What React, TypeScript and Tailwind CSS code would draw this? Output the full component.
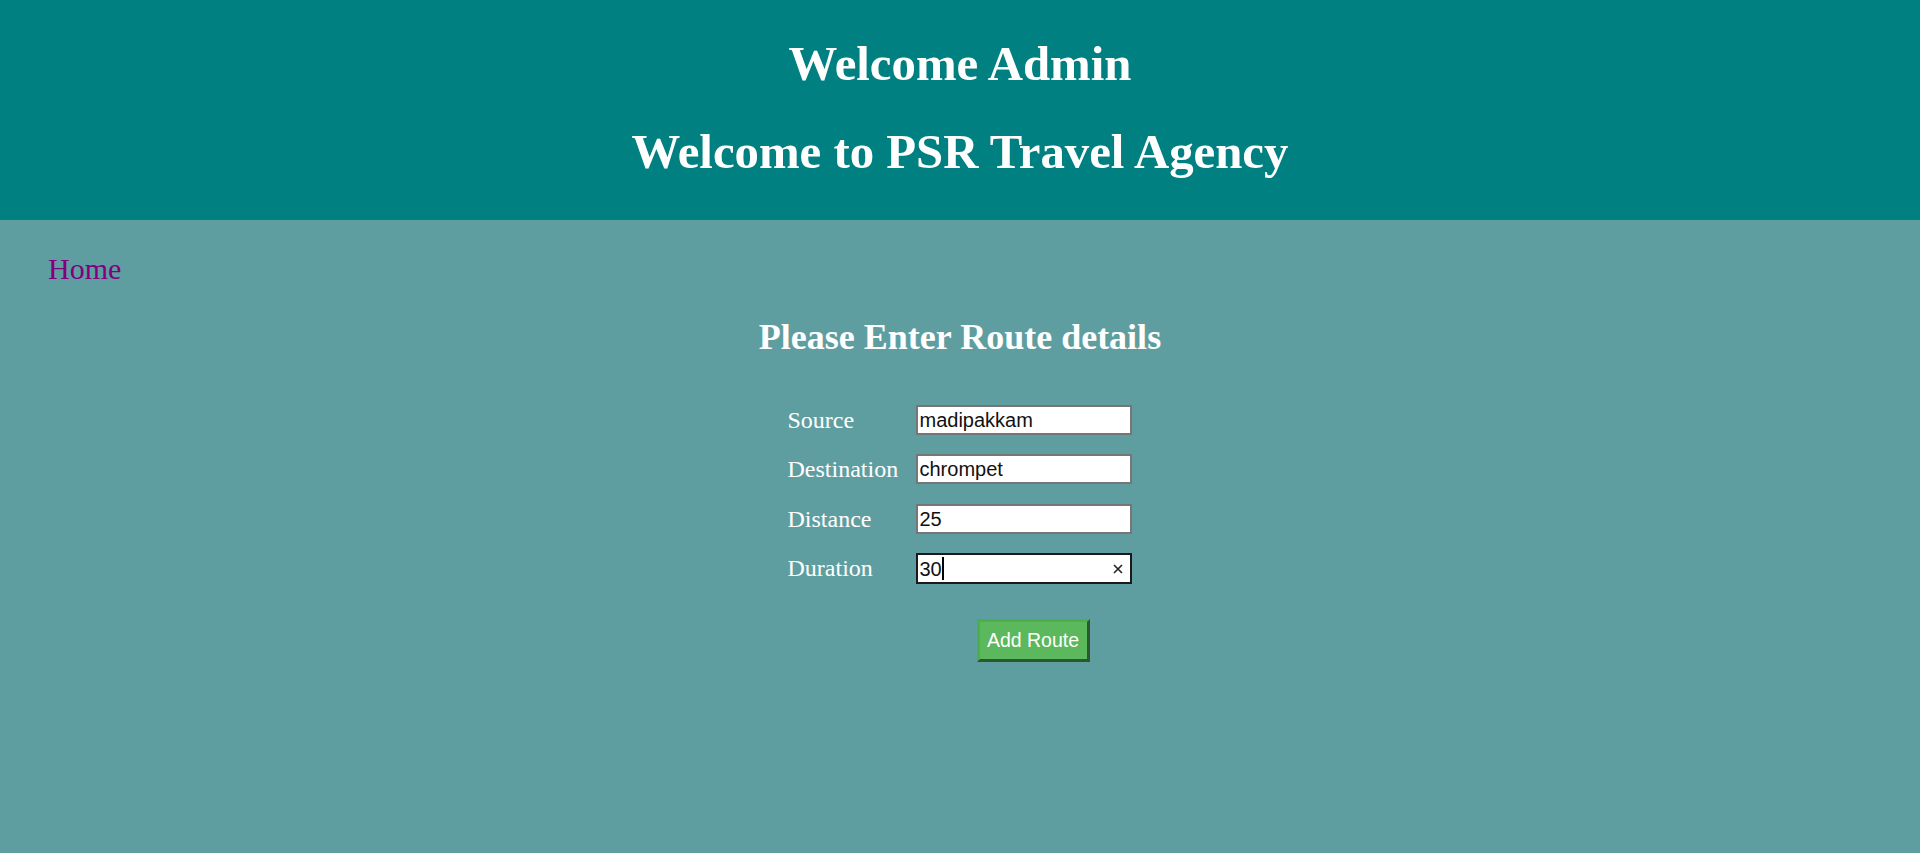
const serif = "font-['Liberation_Serif','Times_New_Roman',serif]";
const sans = "font-['Liberation_Sans',Arial,sans-serif]";

const fields = [
    { label: 'Source', value: 'madipakkam' },
    { label: 'Destination', value: 'chrompet' },
    { label: 'Distance', value: '25' },
];

const App = () => {
    return (
        <div className={`min-h-screen bg-[#5f9ea0] ${serif}`}>
            {/* header */}
            <header className="h-[220px] bg-[#008080] pt-[20px] flex flex-col items-center text-white">
                <h1 className="text-[48.8px] leading-[88px] font-bold whitespace-nowrap">Welcome Admin</h1>
                <h1 className="text-[48.8px] leading-[88px] font-bold whitespace-nowrap">Welcome to PSR Travel Agency</h1>
            </header>

            <nav className="pl-[48px] mt-[31px]">
                <a href="#" className="text-[30px] leading-[36px] text-[#800080]">Home</a>
            </nav>

            <h2 className="mt-[28px] text-center text-[36px] leading-[44px] font-bold text-white">
                Please Enter Route details
            </h2>

            {/* form */}
            <form className="w-[345px] mx-auto mt-[46px]" onSubmit={(e) => e.preventDefault()}>
                <div className="flex flex-col gap-[19.3px]">
                    {fields.map((f) => (
                        <div key={f.label} className="flex items-center h-[30px]">
                            <label className="w-[128px] text-[24px] leading-[30px] text-white">{f.label}</label>
                            <input
                                type="text"
                                defaultValue={f.value}
                                className={`w-[216px] h-[30px] border-2 border-[#767676] bg-white pl-[2px] text-[20px] text-[#111] outline-none ${sans}`}
                            />
                        </div>
                    ))}
                    <div className="flex items-center h-[30px]">
                        <label className="w-[128px] text-[24px] leading-[30px] text-white">Duration</label>
                        <div className={`relative w-[216px] h-[31px] mt-[2px] border-2 border-[#1a1a1a] bg-white pl-[2px] flex items-center text-[20px] text-[#111] ${sans}`}>
                            <span>30</span>
                            <span className="w-[2px] h-[23px] bg-black" />
                            <svg className="absolute right-[7px] top-[9px]" width="10" height="10" viewBox="0 0 10 10">
                                <path d="M1 1L9 9M9 1L1 9" stroke="#222" strokeWidth="1.6" />
                            </svg>
                        </div>
                    </div>
                </div>

                <button
                    type="submit"
                    className={`mt-[36px] ml-[189px] w-[113px] h-[43px] bg-[#5cb85c] border-[3px] border-t-[#4cae4c] border-l-[#4cae4c] border-b-[#2d572d] border-r-[#2d572d] text-white text-[19.5px] ${sans}`}
                >
                    Add Route
                </button>
            </form>
        </div>
    );
};

export default App;
